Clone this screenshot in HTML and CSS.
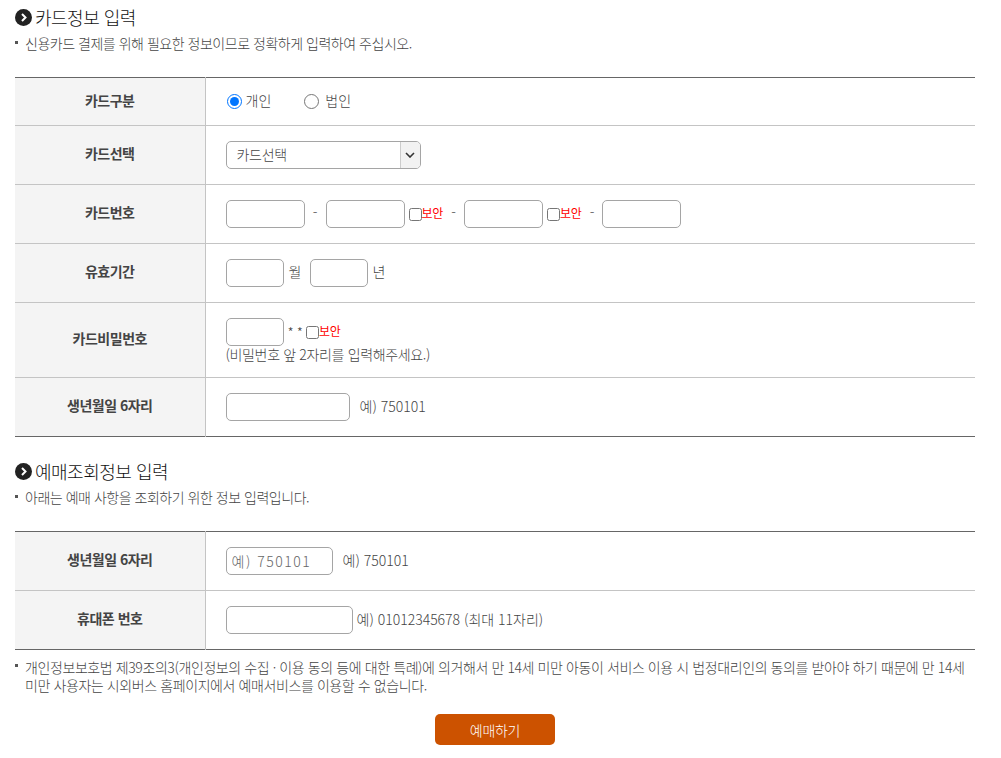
FILE: index.html
```html
<!DOCTYPE html>
<html lang="ko">
<head>
<meta charset="utf-8">
<title>카드정보 입력</title>
<link rel="stylesheet" href="styles.css">
</head>
<body>
<div class="page">
  <h3 class="title"><svg class="ico" viewBox="0 0 17 17"><circle cx="8.5" cy="8.5" r="8.5" fill="#222"/><path d="M7 5l3.5 3.5L7 12" fill="none" stroke="#fff" stroke-width="2"/></svg>카드정보 입력</h3>
  <p class="note">신용카드 결제를 위해 필요한 정보이므로 정확하게 입력하여 주십시오.</p>
  <table class="form first">
    <tr class="r48">
      <th>카드구분</th>
      <td><label class="radio"><input type="radio" name="kind" checked>개인</label><label class="radio"><input type="radio" name="kind">법인</label></td>
    </tr>
    <tr class="r59">
      <th>카드선택</th>
      <td><span class="select"><span class="select-text">카드선택</span><span class="select-btn"><svg viewBox="0 0 10 6" class="chev"><path d="M1 1l4 4 4-4" fill="none" stroke="#333" stroke-width="1.6"/></svg></span></span></td>
    </tr>
    <tr class="r59">
      <th>카드번호</th>
      <td class="line"><input class="in w79"><span class="dash">-</span><input class="in w79"><input type="checkbox" class="chk"><span class="sec">보안</span><span class="dash d2">-</span><input class="in w79"><input type="checkbox" class="chk"><span class="sec">보안</span><span class="dash d2">-</span><input class="in w79"></td>
    </tr>
    <tr class="r59">
      <th>유효기간</th>
      <td class="line"><input class="in w58"><span class="unit">월</span><input class="in w58"><span class="unit">년</span></td>
    </tr>
    <tr class="r75">
      <th>카드비밀번호</th>
      <td class="pw"><div class="line"><input class="in w58"><span class="stars">**</span><input type="checkbox" class="chk c2"><span class="sec">보안</span></div><div class="hint">(비밀번호 앞 2자리를 입력해주세요.)</div></td>
    </tr>
    <tr class="r59 last">
      <th>생년월일 6자리</th>
      <td class="line"><input class="in w124"><span class="eg">예) 750101</span></td>
    </tr>
  </table>
  <h3 class="title second"><svg class="ico" viewBox="0 0 17 17"><circle cx="8.5" cy="8.5" r="8.5" fill="#222"/><path d="M7 5l3.5 3.5L7 12" fill="none" stroke="#fff" stroke-width="2"/></svg>예매조회정보 입력</h3>
  <p class="note">아래는 예매 사항을 조회하기 위한 정보 입력입니다.</p>
  <table class="form second-t">
    <tr class="r59">
      <th>생년월일 6자리</th>
      <td class="line"><input class="in w107 ph" placeholder="예) 750101"><span class="eg e2">예) 750101</span></td>
    </tr>
    <tr class="r59 last">
      <th>휴대폰 번호</th>
      <td class="line"><input class="in w127"><span class="eg e3">예) 01012345678 (최대 11자리)</span></td>
    </tr>
  </table>
  <p class="note wide">개인정보보호법 제39조의3(개인정보의 수집 · 이용 동의 등에 대한 특례)에 의거해서 만 14세 미만 아동이 서비스 이용 시 법정대리인의 동의를 받아야 하기 때문에 만 14세 미만 사용자는 시외버스 홈페이지에서 예매서비스를 이용할 수 없습니다.</p>
  <div class="actions"><button class="submit" type="button">예매하기</button></div>
</div>
</body>
</html>
```
FILE: styles.css
```css
* { box-sizing: border-box; }
html, body { margin: 0; padding: 0; background: #fff; }
body { font-family: "Noto Sans CJK KR", "Noto Sans", sans-serif; font-size: 14px; font-weight: 300; color: #444; height: 758px; overflow: hidden; }
.page { width: 960px; margin-left: 15px; padding-top: 5px; }
.title { display: flex; align-items: center; gap: 3px; margin: 0; height: 24px; font-size: 18px; font-weight: 300; color: #111; letter-spacing: -0.5px; }
.ico { width: 17px; height: 17px; flex: none; }
.title.second { margin-top: 22px; }
.note { position: relative; margin: 6px 0 0; padding-left: 10px; font-size: 14px; line-height: 16px; color: #444; letter-spacing: -0.48px; }
.note::before { content: ""; position: absolute; left: 0; top: 6px; width: 3px; height: 3px; background: #555; }
.form { width: 960px; border-collapse: collapse; table-layout: fixed; border-top: 1px solid #666; border-bottom: 1px solid #666; }
.first { margin-top: 26px; }
.second-t { margin-top: 26px; }
.form tr { border-top: 1px solid #c4c4c4; }
.form tr:first-child { border-top: 0; }
.form th { width: 190px; padding: 0 0 4px; background: #f4f4f4; border-right: 1px solid #c4c4c4; font-size: 14px; font-weight: 700; color: #444; letter-spacing: -0.5px; text-align: center; }
.form td { padding: 0 0 0 20px; vertical-align: middle; font-size: 14px; letter-spacing: 0; }
.form td.pw { padding-top: 15px; vertical-align: top; }
.r48 { height: 48px; }
.r59 { height: 59px; }
.r75 { height: 75px; }
.line > * { vertical-align: middle; }
.radio { display: inline-flex; align-items: center; margin-right: 32px; }
.radio input { width: 15px; height: 15px; margin: 2px 4px 0 1px; accent-color: #0075ff; }
.radio + .radio input { margin-right: 6px; }
.select { display: flex; width: 195px; height: 28px; border: 1px solid #a5a5a5; border-radius: 5px; overflow: hidden; }
.select-text { flex: 1; padding-left: 10px; line-height: 24px; letter-spacing: -0.3px; }
.select-btn { width: 20px; display: flex; align-items: center; justify-content: center; background: #f2f2f2; border-left: 1px solid #ccc; }
.chev { width: 10px; height: 6px; }
.in { height: 28px; border: 1px solid #a5a5a5; border-radius: 5px; padding: 0 5px; background: #fff; font: inherit; margin: 0; }
.w79 { width: 79px; }
.w58 { width: 58px; }
.w124 { width: 124px; }
.w107 { width: 107px; }
.w127 { width: 127px; }
.ph::placeholder { color: #666; letter-spacing: 1.5px; }
.dash { display: inline-block; width: 21px; padding-bottom: 4px; text-align: center; }
.d2 { width: 21px; }
.chk { width: 13px; height: 13px; margin: 0 0 0 4px; }
.sec { display: inline-block; padding-bottom: 3px; color: #f00; font-size: 12px; font-weight: 400; letter-spacing: -0.3px; }
.unit { display: inline-block; margin: 0 6px 0 5px; width: 15px; padding-bottom: 4px; }
.stars { margin-left: 4px; letter-spacing: 3px; }
.c2 { margin-left: 0; }
.eg { display: inline-block; margin-left: 10px; padding-bottom: 2px; }
.e3 { margin-left: 4px; }
.pw .line { height: 28px; }
.hint { font-size: 14px; line-height: 16px; margin-top: 0; letter-spacing: -0.35px; }
.wide { margin-top: 8px; padding-right: 8px; line-height: 18px; letter-spacing: -0.41px; }
.actions { display: flex; justify-content: center; margin-top: 20px; }
.submit { width: 120px; height: 31px; background: #cc5200; color: #fff; border: 0; border-radius: 5px; font: inherit; font-size: 14px; letter-spacing: -0.3px; }
```
